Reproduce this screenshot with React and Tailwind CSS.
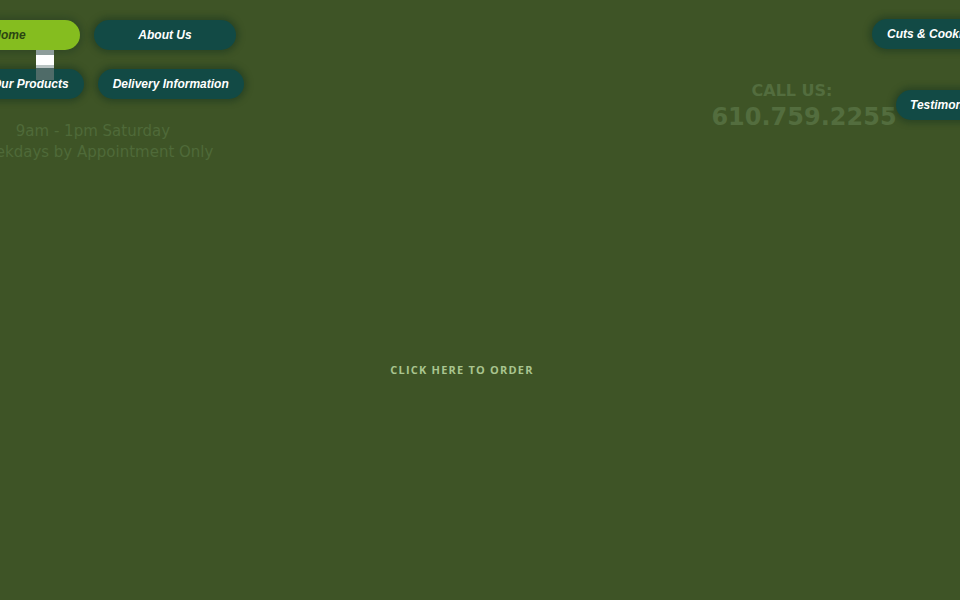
import React from "react";

const pill =
  "flex items-center justify-center h-[30px] rounded-full bg-[#124a45] text-white text-[12px] font-bold italic shadow-[0_0_6px_3px_rgba(10,40,30,0.35)] whitespace-nowrap";

export default function App() {
  return (
    <div
      className="relative w-[960px] h-[600px] overflow-hidden bg-[#3e5426] flex flex-col"
      style={{ fontFamily: "'Liberation Sans', Arial, sans-serif" }}
    >
      <div className="flex justify-between items-start h-[160px]">
        {/* left nav + hours */}
        <div className="relative flex flex-col w-[310px] ml-[-62px] pt-[20px]">
          <div className="flex gap-[14px]">
            <a className="flex items-center justify-center h-[30px] w-[142px] rounded-full bg-[#85bd1f] text-[#2b4512] text-[12px] font-bold italic shadow-[0_0_6px_3px_rgba(10,40,30,0.25)]">
              Home
            </a>
            <a className={pill + " w-[142px]"}>About Us</a>
          </div>
          <div className="flex gap-[14px] mt-[19px] ml-[39px]">
            <a className={pill + " px-[15px]"}>Our Products</a>
            <a className={pill + " px-[15px]"}>Delivery Information</a>
          </div>
          <div
            className="mt-[22px] text-center text-[15px] leading-[21px] text-[#4f6a39] whitespace-nowrap"
            style={{ fontFamily: "'DejaVu Sans', sans-serif" }}
          >
            <p>9am - 1pm Saturday</p>
            <p>Weekdays by Appointment Only</p>
          </div>
          {/* small scroll marker */}
          <div className="absolute left-[98px] top-[50px] w-[18px] flex flex-col">
            <div className="h-[5px] bg-[#8e9d9b]" />
            <div className="h-[10px] bg-white" />
            <div className="h-[3px] bg-[#b9c3c2]" />
            <div className="h-[12px] bg-[#4f6b68]" />
          </div>
        </div>

        {/* right nav + phone */}
        <div className="flex flex-col w-[300px] mr-[-40px] pt-[19px]">
          <a className={pill + " ml-[172px] w-[130px] justify-start pl-[15px]"}>
            Cuts &amp; Cooking
          </a>
          <div className="flex items-start mt-[31px]">
            <div
              className="w-[196px] flex flex-col items-center text-[#536d3e] font-bold"
              style={{ fontFamily: "'DejaVu Sans', sans-serif" }}
            >
              <span className="text-[16px] leading-[20px] pr-[12px] mt-[1px]">CALL US:</span>
              <span className="text-[24px] leading-[28px] pl-[12px] mt-[2px]">610.759.2255</span>
            </div>
            <a className={pill + " mt-[10px] w-[120px] justify-start pl-[14px]"}>
              Testimonials
            </a>
          </div>
        </div>
      </div>

      <div className="flex justify-center pr-[36px] mt-[203px]">
        <a
          className="text-[11px] leading-[14px] font-bold tracking-[1.2px] text-[#a9c58f]"
          style={{ fontFamily: "'Open Sans', sans-serif" }}
        >
          CLICK HERE TO ORDER
        </a>
      </div>
    </div>
  );
}
